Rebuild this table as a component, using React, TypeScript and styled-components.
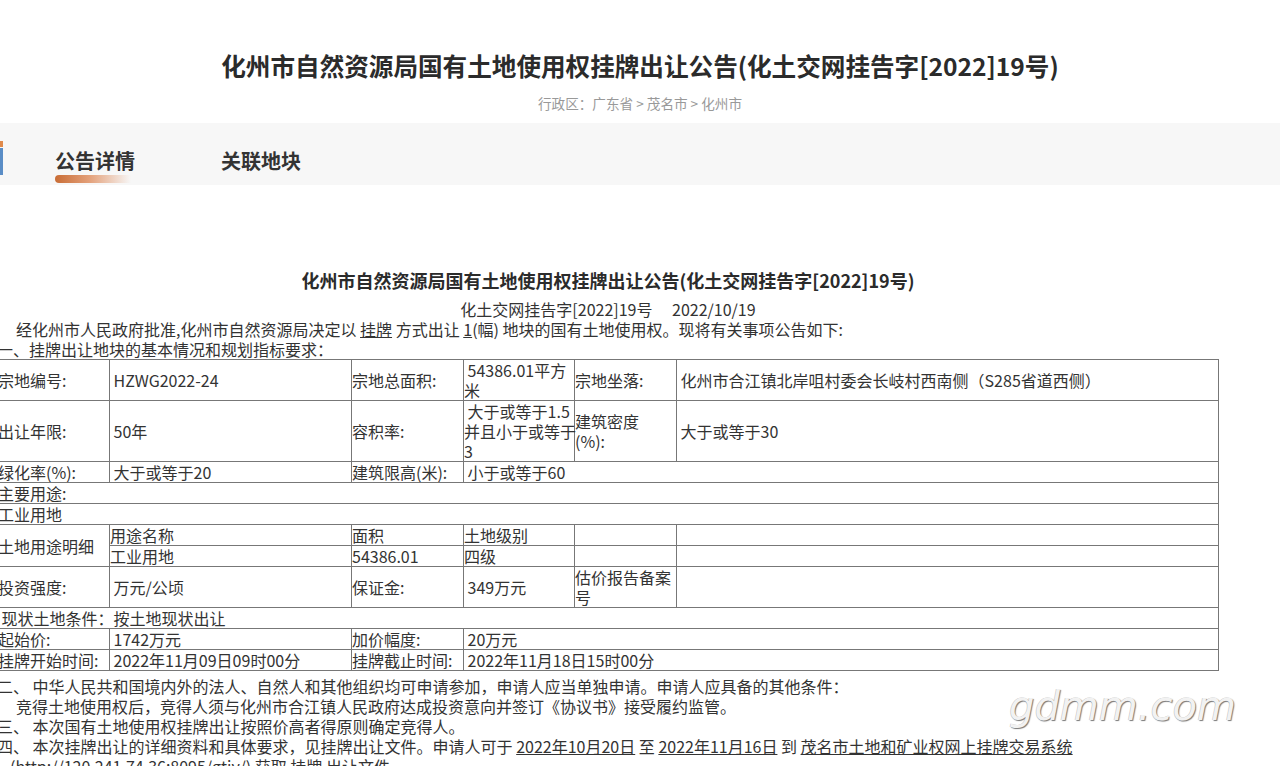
import React from "react";
import styled, { createGlobalStyle } from "styled-components";

const Global = createGlobalStyle`
  html, body { margin: 0; padding: 0; background: #fff; }
  body {
    font-family: "Noto Sans CJK SC", "Noto Sans", sans-serif;
    color: #333;
    overflow: hidden;
    width: 1280px;
    height: 766px;
  }
`;

const Page = styled.div`
  position: relative;
  width: 1280px;
  height: 766px;
  overflow: hidden;
`;

const Header = styled.header`
  display: flex;
  flex-direction: column;
  align-items: center;
  padding-top: 48px;
`;

const MainTitle = styled.h1`
  margin: 0;
  font-size: 24.6px;
  line-height: 34px;
  font-weight: 700;
  color: #2b2b2b;
`;

const Crumbs = styled.div`
  margin-top: 12px;
  font-size: 13.6px;
  line-height: 18px;
  color: #999;
`;

const TabBar = styled.nav`
  margin-top: 11px;
  height: 62px;
  background: #f7f7f7;
  display: flex;
  align-items: flex-start;
`;

const EdgeMark = styled.div`
  margin-top: 18px;
  width: 3px;
  display: flex;
  flex-direction: column;
  gap: 1px;
`;

const EdgeBlock = styled.div<{ $c: string; $h: number }>`
  background: ${(p) => p.$c};
  height: ${(p) => p.$h}px;
`;

const Tab = styled.div<{ $first?: boolean }>`
  margin-left: ${(p) => (p.$first ? 52 : 86)}px;
  padding-top: 26px;
  display: flex;
  flex-direction: column;
`;

const TabLabel = styled.span`
  font-size: 20px;
  line-height: 24px;
  font-weight: 700;
  color: #333;
`;

const TabLine = styled.div`
  margin-top: 2px;
  width: 76px;
  height: 8px;
  border-radius: 4px 0 0 4px;
  background: linear-gradient(90deg, #c96d36 0%, #e3a07a 45%, rgba(255, 255, 255, 0) 100%);
`;

const Article = styled.article`
  margin: 84px 0 0 -3px;
  width: 1222px;
  font-size: 16px;
  line-height: 20px;
  color: #333;
`;

const ArticleTitle = styled.h2`
  margin: 0;
  text-align: center;
  font-size: 18px;
  line-height: 22px;
  font-weight: 700;
  color: #2b2b2b;
`;

const SubTitle = styled.p`
  margin: 8px 0 0;
  text-align: center;
  white-space: pre;
`;

const Para = styled.p<{ $indent?: number }>`
  margin: 0;
  white-space: pre;
  text-indent: ${(p) => p.$indent ?? 0}px;
`;

const U = styled.span`
  text-decoration: underline;
`;

const Table = styled.table`
  width: 1221px;
  table-layout: fixed;
  border-collapse: collapse;
  margin-bottom: 5px;
  border: 1px solid #333;
`;

const Td = styled.td`
  border: 1px solid #777;
  padding: 0;
  font-size: 16px;
  line-height: 20px;
  vertical-align: middle;
  text-align: left;
  white-space: pre;
  overflow: visible;
  color: #333;
`;

const Watermark = styled.div`
  position: absolute;
  left: 1009px;
  top: 676px;
  font-family: "DejaVu Sans", sans-serif;
  font-style: italic;
  font-weight: 200;
  font-size: 40px;
  line-height: 60px;
  color: #f2f2f2;
  text-shadow: 1px 1px 1px #777, -0.5px -0.5px 0 #c4c4c4;
`;

const cols = [112, 242, 112, 111, 102, 542];

export default function App() {
  return (
    <Page>
      <Global />
      <Header>
        <MainTitle>化州市自然资源局国有土地使用权挂牌出让公告(化土交网挂告字[2022]19号)</MainTitle>
        <Crumbs>行政区：广东省 &gt; 茂名市 &gt; 化州市</Crumbs>
      </Header>
      <TabBar>
        <EdgeMark>
          <EdgeBlock $c="#e08a4c" $h={6} />
          <EdgeBlock $c="#5a8dc6" $h={27} />
        </EdgeMark>
        <Tab $first>
          <TabLabel>公告详情</TabLabel>
          <TabLine />
        </Tab>
        <Tab>
          <TabLabel>关联地块</TabLabel>
        </Tab>
      </TabBar>
      <Article>
        <ArticleTitle>化州市自然资源局国有土地使用权挂牌出让公告(化土交网挂告字[2022]19号)</ArticleTitle>
        <SubTitle>化土交网挂告字[2022]19号　 2022/10/19</SubTitle>
        <Para $indent={19}>
          经化州市人民政府批准,化州市自然资源局决定以 <U>挂牌</U> 方式出让 <U>1</U>(幅) 地块的国有土地使用权。现将有关事项公告如下:
        </Para>
        <Para>一、挂牌出让地块的基本情况和规划指标要求：</Para>
        <Table>
          <colgroup>
            {cols.map((w, i) => (
              <col key={i} style={{ width: w }} />
            ))}
          </colgroup>
          <tbody>
            <tr>
              <Td>宗地编号:</Td>
              <Td> HZWG2022-24</Td>
              <Td>宗地总面积:</Td>
              <Td>{" 54386.01平方\n米"}</Td>
              <Td>宗地坐落:</Td>
              <Td> 化州市合江镇北岸咀村委会长岐村西南侧（S285省道西侧）</Td>
            </tr>
            <tr>
              <Td>出让年限:</Td>
              <Td> 50年</Td>
              <Td>容积率:</Td>
              <Td>{" 大于或等于1.5\n并且小于或等于\n3"}</Td>
              <Td>{"建筑密度\n(%):"}</Td>
              <Td> 大于或等于30</Td>
            </tr>
            <tr>
              <Td>绿化率(%):</Td>
              <Td> 大于或等于20</Td>
              <Td>建筑限高(米):</Td>
              <Td colSpan={3}> 小于或等于60</Td>
            </tr>
            <tr>
              <Td colSpan={6}>主要用途:</Td>
            </tr>
            <tr>
              <Td colSpan={6}>工业用地</Td>
            </tr>
            <tr>
              <Td rowSpan={2}>土地用途明细</Td>
              <Td>用途名称</Td>
              <Td>面积</Td>
              <Td>土地级别</Td>
              <Td></Td>
              <Td></Td>
            </tr>
            <tr>
              <Td>工业用地</Td>
              <Td>54386.01</Td>
              <Td>四级</Td>
              <Td></Td>
              <Td></Td>
            </tr>
            <tr>
              <Td>投资强度:</Td>
              <Td> 万元/公顷</Td>
              <Td>保证金:</Td>
              <Td> 349万元</Td>
              <Td>{"估价报告备案\n号"}</Td>
              <Td></Td>
            </tr>
            <tr>
              <Td colSpan={6}> 现状土地条件：按土地现状出让</Td>
            </tr>
            <tr>
              <Td>起始价:</Td>
              <Td> 1742万元</Td>
              <Td>加价幅度:</Td>
              <Td colSpan={3}> 20万元</Td>
            </tr>
            <tr>
              <Td>挂牌开始时间:</Td>
              <Td> 2022年11月09日09时00分</Td>
              <Td>挂牌截止时间:</Td>
              <Td colSpan={3}> 2022年11月18日15时00分</Td>
            </tr>
          </tbody>
        </Table>
        <Para>二、 中华人民共和国境内外的法人、自然人和其他组织均可申请参加，申请人应当单独申请。申请人应具备的其他条件：</Para>
        <Para $indent={19}>竞得土地使用权后，竞得人须与化州市合江镇人民政府达成投资意向并签订《协议书》接受履约监管。</Para>
        <Para>三、 本次国有土地使用权挂牌出让按照价高者得原则确定竞得人。</Para>
        <Para>
          四、 本次挂牌出让的详细资料和具体要求，见挂牌出让文件。申请人可于 <U>2022年10月20日</U> 至 <U>2022年11月16日</U> 到 <U>茂名市土地和矿业权网上挂牌交易系统</U>
        </Para>
        <Para $indent={13}>
          (http://120.241.74.36:8095/gtjy/) 获取 <U>挂牌</U> 出让文件。
        </Para>
      </Article>
      <Watermark>gdmm.com</Watermark>
    </Page>
  );
}
